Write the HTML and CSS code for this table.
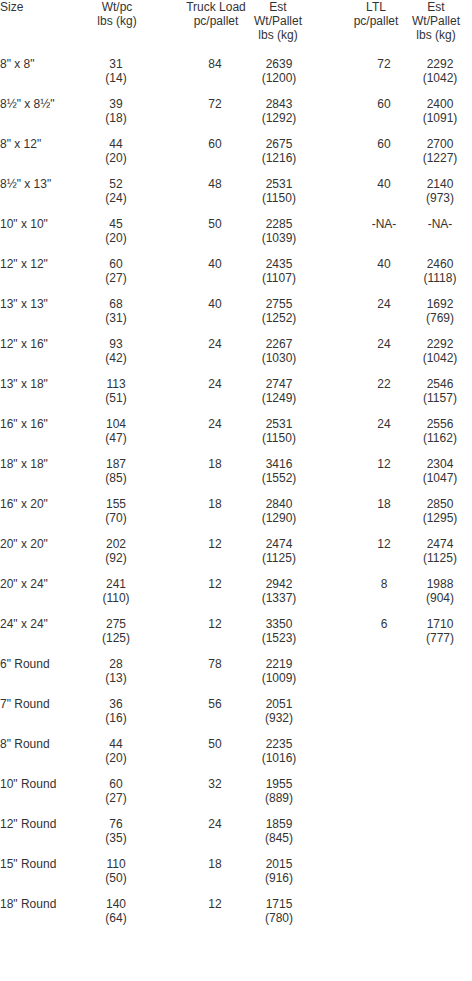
FILE: index.html
```html
<!DOCTYPE html>
<html>
<head>
<meta charset="utf-8">
<link rel="stylesheet" href="styles.css">
</head>
<body>
<div class="sheet">
  <div class="grid head">
    <div class="size">Size</div>
    <div class="wt">Wt/pc<br>lbs (kg)</div>
    <div class="tl">Truck Load<br>pc/pallet</div>
    <div class="tlw">Est<br>Wt/Pallet<br>lbs (kg)</div>
    <div class="ltl">LTL<br>pc/pallet</div>
    <div class="ltlw">Est<br>Wt/Pallet<br>lbs (kg)</div>
  </div>
  <div class="grid body">
    <div class="size">8" x 8"</div><div class="wt">31<br>(14)</div><div class="tl">84</div><div class="tlw">2639<br>(1200)</div><div class="ltl">72</div><div class="ltlw">2292<br>(1042)</div>
    <div class="size">8½" x 8½"</div><div class="wt">39<br>(18)</div><div class="tl">72</div><div class="tlw">2843<br>(1292)</div><div class="ltl">60</div><div class="ltlw">2400<br>(1091)</div>
    <div class="size">8" x 12"</div><div class="wt">44<br>(20)</div><div class="tl">60</div><div class="tlw">2675<br>(1216)</div><div class="ltl">60</div><div class="ltlw">2700<br>(1227)</div>
    <div class="size">8½" x 13"</div><div class="wt">52<br>(24)</div><div class="tl">48</div><div class="tlw">2531<br>(1150)</div><div class="ltl">40</div><div class="ltlw">2140<br>(973)</div>
    <div class="size">10" x 10"</div><div class="wt">45<br>(20)</div><div class="tl">50</div><div class="tlw">2285<br>(1039)</div><div class="ltl">-NA-</div><div class="ltlw">-NA-</div>
    <div class="size">12" x 12"</div><div class="wt">60<br>(27)</div><div class="tl">40</div><div class="tlw">2435<br>(1107)</div><div class="ltl">40</div><div class="ltlw">2460<br>(1118)</div>
    <div class="size">13" x 13"</div><div class="wt">68<br>(31)</div><div class="tl">40</div><div class="tlw">2755<br>(1252)</div><div class="ltl">24</div><div class="ltlw">1692<br>(769)</div>
    <div class="size">12" x 16"</div><div class="wt">93<br>(42)</div><div class="tl">24</div><div class="tlw">2267<br>(1030)</div><div class="ltl">24</div><div class="ltlw">2292<br>(1042)</div>
    <div class="size">13" x 18"</div><div class="wt">113<br>(51)</div><div class="tl">24</div><div class="tlw">2747<br>(1249)</div><div class="ltl">22</div><div class="ltlw">2546<br>(1157)</div>
    <div class="size">16" x 16"</div><div class="wt">104<br>(47)</div><div class="tl">24</div><div class="tlw">2531<br>(1150)</div><div class="ltl">24</div><div class="ltlw">2556<br>(1162)</div>
    <div class="size">18" x 18"</div><div class="wt">187<br>(85)</div><div class="tl">18</div><div class="tlw">3416<br>(1552)</div><div class="ltl">12</div><div class="ltlw">2304<br>(1047)</div>
    <div class="size">16" x 20"</div><div class="wt">155<br>(70)</div><div class="tl">18</div><div class="tlw">2840<br>(1290)</div><div class="ltl">18</div><div class="ltlw">2850<br>(1295)</div>
    <div class="size">20" x 20"</div><div class="wt">202<br>(92)</div><div class="tl">12</div><div class="tlw">2474<br>(1125)</div><div class="ltl">12</div><div class="ltlw">2474<br>(1125)</div>
    <div class="size">20" x 24"</div><div class="wt">241<br>(110)</div><div class="tl">12</div><div class="tlw">2942<br>(1337)</div><div class="ltl">8</div><div class="ltlw">1988<br>(904)</div>
    <div class="size">24" x 24"</div><div class="wt">275<br>(125)</div><div class="tl">12</div><div class="tlw">3350<br>(1523)</div><div class="ltl">6</div><div class="ltlw">1710<br>(777)</div>
    <div class="size">6" Round</div><div class="wt">28<br>(13)</div><div class="tl">78</div><div class="tlw">2219<br>(1009)</div>
    <div class="size">7" Round</div><div class="wt">36<br>(16)</div><div class="tl">56</div><div class="tlw">2051<br>(932)</div>
    <div class="size">8" Round</div><div class="wt">44<br>(20)</div><div class="tl">50</div><div class="tlw">2235<br>(1016)</div>
    <div class="size">10" Round</div><div class="wt">60<br>(27)</div><div class="tl">32</div><div class="tlw">1955<br>(889)</div>
    <div class="size">12" Round</div><div class="wt">76<br>(35)</div><div class="tl">24</div><div class="tlw">1859<br>(845)</div>
    <div class="size">15" Round</div><div class="wt">110<br>(50)</div><div class="tl">18</div><div class="tlw">2015<br>(916)</div>
    <div class="size">18" Round</div><div class="wt">140<br>(64)</div><div class="tl">12</div><div class="tlw">1715<br>(780)</div>
  </div>
</div>
</body>
</html>
```

FILE: styles.css
```css
html, body {
  margin: 0;
  padding: 0;
  background: #ffffff;
}

body {
  font-family: "Liberation Sans", Arial, sans-serif;
  font-size: 12px;
  line-height: 14px;
  color: #333333;
}

.grid {
  display: grid;
  text-align: center;
}

.head {
  grid-template-columns: 87px 60px 38px 62px 62px 36px 62px 58px;
  margin-bottom: 15px;
}

.body {
  grid-template-columns: 86px 60px 38px 62px 66px 42px 60px 52px;
  row-gap: 12px;
}

.size {
  grid-column: 1;
  text-align: left;
  white-space: nowrap;
}

.wt { grid-column: 2; }
.tl { grid-column: 4; white-space: nowrap; }
.tlw { grid-column: 5; }
.ltl { grid-column: 7; }
.ltlw { grid-column: 8; }
```
